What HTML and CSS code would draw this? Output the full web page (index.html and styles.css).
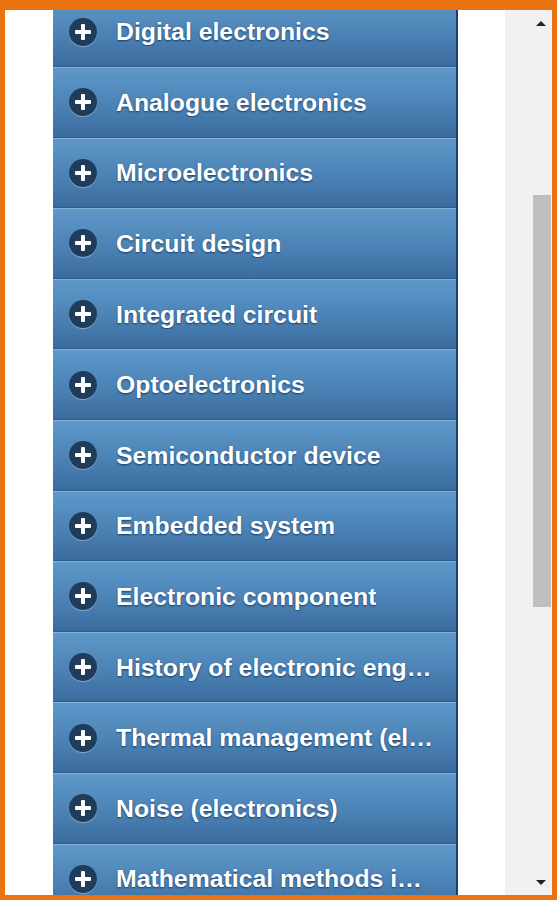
FILE: index.html
```html
<!DOCTYPE html>
<html lang="en">

<head>
    <meta charset="UTF-8">
    <title>Electronics</title>
    <link rel="stylesheet" href="styles.css">
</head>

<body>
    <div class="frame">
        <div class="page">
            <div class="menu">
                <ul class="list">
                    <li><span class="plus"></span><span class="label">Digital electronics</span></li>
                    <li><span class="plus"></span><span class="label">Analogue electronics</span></li>
                    <li><span class="plus"></span><span class="label">Microelectronics</span></li>
                    <li><span class="plus"></span><span class="label">Circuit design</span></li>
                    <li><span class="plus"></span><span class="label">Integrated circuit</span></li>
                    <li><span class="plus"></span><span class="label">Optoelectronics</span></li>
                    <li><span class="plus"></span><span class="label">Semiconductor device</span></li>
                    <li><span class="plus"></span><span class="label">Embedded system</span></li>
                    <li><span class="plus"></span><span class="label">Electronic component</span></li>
                    <li><span class="plus"></span><span class="label">History of electronic engineering</span></li>
                    <li><span class="plus"></span><span class="label">Thermal management (electronics)</span></li>
                    <li><span class="plus"></span><span class="label">Noise (electronics)</span></li>
                    <li><span class="plus"></span><span class="label">Mathematical methods in electronics</span></li>
                </ul>
            </div>
        </div>
        <div class="scrollbar">
            <div class="arrow up"></div>
            <div class="thumb"></div>
            <div class="arrow down"></div>
        </div>
    </div>
</body>

</html>
```

FILE: styles.css
```css
html,
body {
    margin: 0;
    padding: 0;
}

.frame {
    width: 557px;
    height: 900px;
    box-sizing: border-box;
    border: #e8730f 5px solid;
    border-top-width: 10px;
    background-color: #fff;
    display: flex;
    overflow: hidden;
}

.page {
    flex: 1;
    overflow: hidden;
}

.menu {
    width: 403px;
    margin-left: 48px;
    border-right: #1b3f6b 2px solid;
    height: 100%;
    overflow: hidden;
}

.list {
    list-style: none;
    margin: -13.6px 0 0 0;
    padding: 0;
}

.list li {
    height: 70.6px;
    box-sizing: border-box;
    display: flex;
    align-items: center;
    padding: 1px 21px 0 16px;
    border-top: #86b2da 1px solid;
    border-bottom: #2d5b8c 1px solid;
    background: linear-gradient(#5e98c9, #4b82b5 55%, #3b6b9d);
}

.plus {
    width: 28px;
    height: 28px;
    flex-shrink: 0;
    border-radius: 50%;
    background-color: #1f3c5b;
    box-shadow: 0 1px 1px rgba(255, 255, 255, 0.35);
    position: relative;
    margin: -1px 19px 0 0;
}

.plus::before,
.plus::after {
    content: "";
    position: absolute;
    background-color: #fff;
    border-radius: 1px;
    left: 50%;
    top: 50%;
}

.plus::before {
    width: 16px;
    height: 4px;
    margin: -2px 0 0 -8px;
}

.plus::after {
    width: 4px;
    height: 16px;
    margin: -8px 0 0 -2px;
}

.label {
    font-family: "Liberation Sans", Arial, sans-serif;
    font-weight: bold;
    font-size: 24.8px;
    color: #fff;
    text-shadow: 0 1px 2px #163d66;
    white-space: nowrap;
    overflow: hidden;
    text-overflow: ellipsis;
}

.scrollbar {
    width: 47px;
    background-color: #f1f1f1;
    display: flex;
    flex-direction: column;
    align-items: center;
}

.arrow {
    width: 0;
    height: 0;
    border-left: 5px solid transparent;
    border-right: 5px solid transparent;
    margin-left: 24px;
}

.up {
    border-bottom: 5px solid #222;
    margin-top: 11px;
}

.down {
    border-top: 5px solid #222;
    margin-top: auto;
    margin-bottom: 10px;
}

.thumb {
    width: 18px;
    height: 412px;
    background-color: #bfbfbf;
    margin: 169px 0 0 26px;
}
```
